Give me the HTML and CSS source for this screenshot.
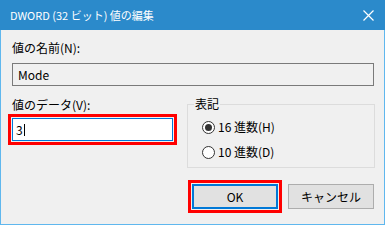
FILE: index.html
```html
<!DOCTYPE html>
<html lang="ja">
<head>
  <meta charset="UTF-8">
  <meta name="viewport" content="width=device-width, initial-scale=1.0">
  <title>DWORD (32 ビット) 値の編集</title>
  <link rel="stylesheet" href="styles.css">
</head>
<body>
  <div class="window">
    <div class="titlebar">
      <span class="title">DWORD (32 ビット) 値の編集</span>
      <span class="close">
        <svg width="11" height="11" viewBox="0 0 11 11"><path d="M0.5 0.5 L10.5 10.5 M10.5 0.5 L0.5 10.5" stroke="#fff" stroke-width="1.2" fill="none"/></svg>
      </span>
    </div>

    <div class="content">
      <!-- 値の名前 -->
      <div class="label">値の名前(N):</div>
      <div class="field readonly">Mode</div>

      <div class="row">
        <div class="col-data">
          <div class="label">値のデータ(V):</div>
          <div class="mark">
            <div class="field focus">3<span class="caret"></span></div>
          </div>
        </div>

        <fieldset class="group">
          <legend>表記</legend>
          <div class="radio-row"><span class="radio checked"></span>16 進数(H)</div>
          <div class="radio-row"><span class="radio"></span>10 進数(D)</div>
        </fieldset>
      </div>

      <div class="buttons">
        <div class="mark">
          <div class="btn default">OK</div>
        </div>
        <div class="btn">キャンセル</div>
      </div>
    </div>
  </div>
</body>
</html>
```

FILE: styles.css
```css
* {margin:0; padding:0; box-sizing:border-box;}
body{
  font-family: "Noto Sans CJK JP", sans-serif;
  font-size: 12px;
  color: #000;
  background: #fff;
}
.window{
  width: 385px;
  height: 225px;
  background: #f0f0f0;
  border: 1px solid #5fb7ee;
  border-top: 0;
}

/* タイトルバー */
.titlebar{
  height: 30px;
  margin: 0 -1px;
  background: #2b8acb;
  color: #fff;
  display: flex;
  align-items: center;
  justify-content: space-between;
  padding: 0 11px 0 10px;
}
.title{line-height: 16px; font-size: 11px;}
.close{display: flex;}

.content{
  padding: 10px 10px 0 11px;
}
.label{
  line-height: 16px;
  height: 16px;
}
.field{
  height: 23px;
  border: 1px solid #7a7a7a;
  line-height: 21px;
  padding-left: 5px;
  margin-top: 7px;
}
.field.readonly{background: #f0f0f0;}

.row{
  display: flex;
  justify-content: space-between;
  align-items: flex-start;
  margin-top: 10px;
}
.col-data{
  padding-top: 1px;
}
.mark{
  border: 3px solid #ff0000;
  padding: 1px;
}
.col-data .mark{
  margin: 1px 0 0 -4px;
}
.field.focus{
  margin: 0;
  width: 161px;
  background: #fff;
  border-color: #0078d7;
  padding-left: 3px;
  display: flex;
  align-items: center;
}
.caret{
  display: inline-block;
  width: 1px;
  height: 12px;
  background: #000;
  margin-left: 1px;
}

/* 表記 */
.group{
  width: 188px;
  height: 72px;
  margin-right: -1px;
  border: 1px solid #dcdcdc;
  padding: 0 0 0 14px;
  min-width: 0;
}
.group legend{
  margin-left: -8px;
  padding: 0 1px;
  line-height: 16px;
}
.radio-row{
  display: flex;
  align-items: center;
  line-height: 16px;
  gap: 3px;
  margin-top: 7px;
}
.radio-row + .radio-row{margin-top: 9px;}
.radio{
  width: 13px;
  height: 13px;
  border: 1px solid #333;
  border-radius: 50%;
  background: #fff;
  display: grid;
  place-items: center;
}
.radio.checked::after{
  content: "";
  width: 7px;
  height: 7px;
  border-radius: 50%;
  background: #333;
}

/* ボタン */
.buttons{
  display: flex;
  justify-content: flex-end;
  align-items: center;
  gap: 6px;
  margin-top: 12px;
}
.btn{
  width: 86px;
  height: 25px;
  background: #e1e1e1;
  border: 1px solid #adadad;
  display: flex;
  align-items: center;
  justify-content: center;
}
.btn.default{
  border: 2px solid #0078d7;
}
```
